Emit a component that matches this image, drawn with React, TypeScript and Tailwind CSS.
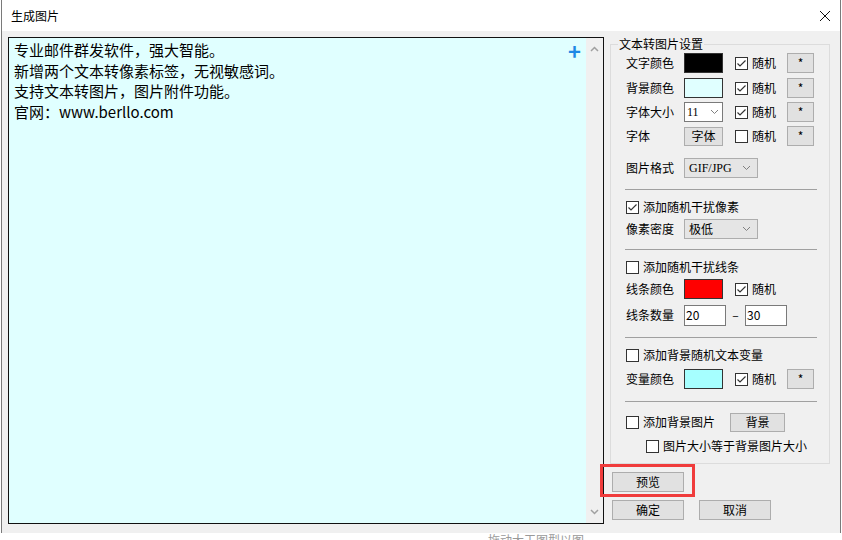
import React from 'react';

const FONT = { fontFamily: '"Noto Sans CJK SC", "Microsoft YaHei", sans-serif' };
const SERIF = { fontFamily: '"Liberation Serif", "Noto Sans CJK SC", serif' };

function Check({ checked }: { checked?: boolean }) {
  return (
    <span className="w-[13px] h-[13px] border border-[#333333] bg-white flex items-center justify-center shrink-0">
      {checked && (
        <svg width="11" height="11" viewBox="0 0 11 11">
          <polyline points="1.5,5.5 4,8 9.5,2.5" fill="none" stroke="#333333" strokeWidth="1.2" />
        </svg>
      )}
    </span>
  );
}

function CheckLabel({ checked, label }: { checked?: boolean; label: string }) {
  return (
    <span className="flex items-center gap-[4px]">
      <Check checked={checked} />
      <span>{label}</span>
    </span>
  );
}

function Btn({ label, w, h = 20 }: { label: string; w: string; h?: number }) {
  return (
    <button
      className={`${w} ${h === 20 ? 'h-[20px]' : 'h-[19px]'} bg-[#e1e1e1] border border-[#adadad] text-[12px] text-black flex items-center justify-center leading-none`}
    >
      {label}
    </button>
  );
}

function Swatch({ color }: { color: string }) {
  return <span className="w-[39px] h-[20px] border border-[#333333] block" style={{ backgroundColor: color }} />;
}

function Chevron() {
  return (
    <svg width="9" height="6" viewBox="0 0 9 6" className="shrink-0">
      <polyline points="1,1 4.5,4.5 8,1" fill="none" stroke="#808080" strokeWidth="1" />
    </svg>
  );
}

function Label({ text }: { text: string }) {
  return <span className="w-[58px] shrink-0">{text}</span>;
}

function RandomCell({ checked, star = true }: { checked?: boolean; star?: boolean }) {
  return (
    <>
      <span className="w-[52px] shrink-0">
        <CheckLabel checked={checked} label="随机" />
      </span>
      {star && <Btn label="*" w="w-[27px]" />}
    </>
  );
}

export default function App() {
  return (
    <div className="w-[842px] h-[540px] bg-white relative overflow-hidden text-black" style={FONT}>
      <div className="ml-[1px] w-[840px] h-[533px] border border-[#7a7a7a] border-t-0 flex flex-col">
        {/* title bar */}
        <div className="h-[31px] bg-white flex items-center justify-between pl-[9px] pr-[8px] shrink-0">
          <span className="text-[12px]">生成图片</span>
          <svg width="12" height="12" viewBox="0 0 12 12" className="mr-[1px]">
            <path d="M1 1 L11 11 M11 1 L1 11" stroke="#111" strokeWidth="1" />
          </svg>
        </div>

        {/* body */}
        <div className="flex-1 bg-[#f0f0f0] flex pt-[6px] pl-[6px] pb-[9px]">
          {/* text area */}
          <div className="w-[596px] h-[487px] border border-[#111111] bg-[#e0ffff] flex relative">
            <div className="flex-1 pl-[5px] pt-[2px] text-[15px] leading-[20.5px]">
              <div>专业邮件群发软件，强大智能。</div>
              <div>新增两个文本转像素标签，无视敏感词。</div>
              <div>支持文本转图片，图片附件功能。</div>
              <div>官网：www.berllo.com</div>
            </div>
            <span className="absolute right-[22px] top-[2px] text-[#1e88e5] text-[22px] font-bold leading-[20px]">+</span>
            <div className="w-[17px] bg-[#f0f0f0] flex flex-col items-center justify-between py-[8px]">
              <svg width="9" height="6" viewBox="0 0 9 6">
                <polyline points="1,5 4.5,1.5 8,5" fill="none" stroke="#a0a0a0" strokeWidth="1.5" />
              </svg>
              <svg width="9" height="6" viewBox="0 0 9 6">
                <polyline points="1,1 4.5,4.5 8,1" fill="none" stroke="#a0a0a0" strokeWidth="1.5" />
              </svg>
            </div>
          </div>

          {/* settings column */}
          <div className="ml-[6px] w-[220px] relative text-[12px]">
            <div className="mt-[7px] border border-[#dcdcdc] relative pl-[15px] pb-[6px]">
              <span className="absolute -top-[9px] left-[7px] bg-[#f0f0f0] px-[1px] leading-[16px]">文本转图片设置</span>

              <div className="flex items-center h-[22px] mt-[7px]">
                <Label text="文字颜色" />
                <span className="w-[51px] shrink-0"><Swatch color="#000000" /></span>
                <RandomCell checked />
              </div>
              <div className="flex items-center h-[22px] mt-[3px]">
                <Label text="背景颜色" />
                <span className="w-[51px] shrink-0"><Swatch color="#e0ffff" /></span>
                <RandomCell checked />
              </div>
              <div className="flex items-center h-[22px] mt-[2px]">
                <Label text="字体大小" />
                <span className="w-[51px] shrink-0">
                  <span className="w-[39px] h-[20px] border border-[#7a7a7a] bg-white flex items-center justify-between pl-[2px] pr-[3px]" style={SERIF}>
                    <span className="text-[12px]">11</span>
                    <Chevron />
                  </span>
                </span>
                <RandomCell checked />
              </div>
              <div className="flex items-center h-[22px] mt-[2px]">
                <Label text="字体" />
                <span className="w-[51px] shrink-0"><Btn label="字体" w="w-[39px]" h={19} /></span>
                <RandomCell />
              </div>
              <div className="flex items-center h-[22px] mt-[10px]">
                <Label text="图片格式" />
                <span className="w-[74px] h-[20px] border border-[#adadad] bg-[#e5e5e5] flex items-center justify-between pl-[4px] pr-[6px]" style={SERIF}>
                  <span>GIF/JPG</span>
                  <Chevron />
                </span>
              </div>

              <div className="mt-[10px] mr-[12px] -ml-[1px] h-px bg-[#a0a0a0]" />

              <div className="flex items-center h-[22px] mt-[6px]">
                <CheckLabel checked label="添加随机干扰像素" />
              </div>
              <div className="flex items-center h-[22px]">
                <Label text="像素密度" />
                <span className="w-[74px] h-[20px] border border-[#adadad] bg-[#e5e5e5] flex items-center justify-between pl-[4px] pr-[6px]">
                  <span>极低</span>
                  <Chevron />
                </span>
              </div>

              <div className="mt-[9px] mr-[12px] -ml-[1px] h-px bg-[#a0a0a0]" />

              <div className="flex items-center h-[22px] mt-[6px]">
                <CheckLabel label="添加随机干扰线条" />
              </div>
              <div className="flex items-center h-[22px]">
                <Label text="线条颜色" />
                <span className="w-[51px] shrink-0"><Swatch color="#ff0000" /></span>
                <RandomCell checked star={false} />
              </div>
              <div className="flex items-center h-[22px] mt-[4px]">
                <Label text="线条数量" />
                <span className="w-[42px] h-[21px] border border-[#7a7a7a] bg-white flex items-center pl-[1px]">20</span>
                <span className="w-[19px] text-center">–</span>
                <span className="w-[42px] h-[21px] border border-[#7a7a7a] bg-white flex items-center pl-[1px]">30</span>
              </div>

              <div className="mt-[11px] mr-[12px] -ml-[1px] h-px bg-[#a0a0a0]" />

              <div className="flex items-center h-[22px] mt-[6px]">
                <CheckLabel label="添加背景随机文本变量" />
              </div>
              <div className="flex items-center h-[22px] mt-[2px]">
                <Label text="变量颜色" />
                <span className="w-[51px] shrink-0"><Swatch color="#a6ffff" /></span>
                <RandomCell checked />
              </div>

              <div className="mt-[11px] mr-[12px] -ml-[1px] h-px bg-[#a0a0a0]" />

              <div className="flex items-center h-[22px] mt-[9px]">
                <span className="w-[104px] shrink-0">
                  <CheckLabel label="添加背景图片" />
                </span>
                <Btn label="背景" w="w-[55px]" h={19} />
              </div>
              <div className="flex items-center h-[22px] mt-[2px] pl-[20px]">
                <CheckLabel label="图片大小等于背景图片大小" />
              </div>
            </div>

            <div className="mt-[8px] ml-[2px]">
              <Btn label="预览" w="w-[72px]" />
            </div>
            <div className="mt-[8px] ml-[2px] flex gap-[15px]">
              <Btn label="确定" w="w-[72px]" />
              <Btn label="取消" w="w-[72px]" />
            </div>

            {/* red annotation box */}
            <div className="absolute left-[-10px] top-[427px] w-[95px] h-[33px] border-[3px] border-[#f03c3c]" />
          </div>
        </div>
      </div>
      <span className="absolute left-[488px] top-[533px] text-[12px] text-[#9a9a9a] leading-[14px]">拖动大工图型以图</span>
    </div>
  );
}
